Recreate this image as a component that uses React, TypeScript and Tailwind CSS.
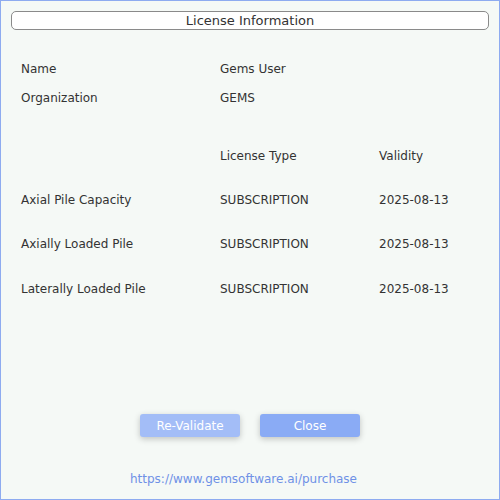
import React from "react";

const font = { fontFamily: '"DejaVu Sans", sans-serif' };

export default function App() {
  const rows = [
    ["Axial Pile Capacity", "SUBSCRIPTION", "2025-08-13", "mt-[16px]"],
    ["Axially Loaded Pile", "SUBSCRIPTION", "2025-08-13", "mt-[16px]"],
    ["Laterally Loaded Pile", "SUBSCRIPTION", "2025-08-13", "mt-[17px]"],
  ];
  return (
    <div
      className="w-[500px] h-[500px] border border-[#8eabf0] bg-[#f5f9f6] flex flex-col text-[12px] text-[#333333]"
      style={font}
    >
      <div className="mx-[10px] mt-[10px] h-[19px] rounded-[5px] border border-[#8a8a8a] bg-white flex items-center justify-center text-[13px] text-[#333333] leading-none">
        License Information
      </div>
      <div className="mt-[24px] pl-[20px] grid grid-cols-[199px_159px_1fr]">
        <div className="h-[29px] flex items-center">Name</div>
        <div className="h-[29px] flex items-center">Gems User</div>
        <div />
        <div className="h-[29px] flex items-center">Organization</div>
        <div className="h-[29px] flex items-center">GEMS</div>
        <div />
        <div className="h-[28px] mt-[30px]" />
        <div className="h-[28px] mt-[30px] flex items-center">License Type</div>
        <div className="h-[28px] mt-[30px] flex items-center">Validity</div>
        {rows.map((r, i) => (
          <React.Fragment key={i}>
            <div className={`h-[28px] ${r[3]} flex items-center`}>{r[0]}</div>
            <div className={`h-[28px] ${r[3]} flex items-center`}>{r[1]}</div>
            <div className={`h-[28px] ${r[3]} flex items-center`}>{r[2]}</div>
          </React.Fragment>
        ))}
      </div>
      <div className="flex-1" />
      <div className="flex justify-center gap-[20px]">
        <button className="w-[100px] h-[23px] rounded-[3px] bg-[#a3bdf7] text-white text-[12px] shadow-[0_2px_6px_rgba(0,0,0,0.22)]">
          Re-Validate
        </button>
        <button className="w-[100px] h-[23px] rounded-[3px] bg-[#8aabf5] text-white text-[12px] shadow-[0_2px_6px_rgba(0,0,0,0.22)]">
          Close
        </button>
      </div>
      <div className="mt-[33px] mb-[12px] pr-[13px] h-[17px] flex items-center justify-center text-[#6f91e6] text-[12px]">
        https://www.gemsoftware.ai/purchase
      </div>
    </div>
  );
}
